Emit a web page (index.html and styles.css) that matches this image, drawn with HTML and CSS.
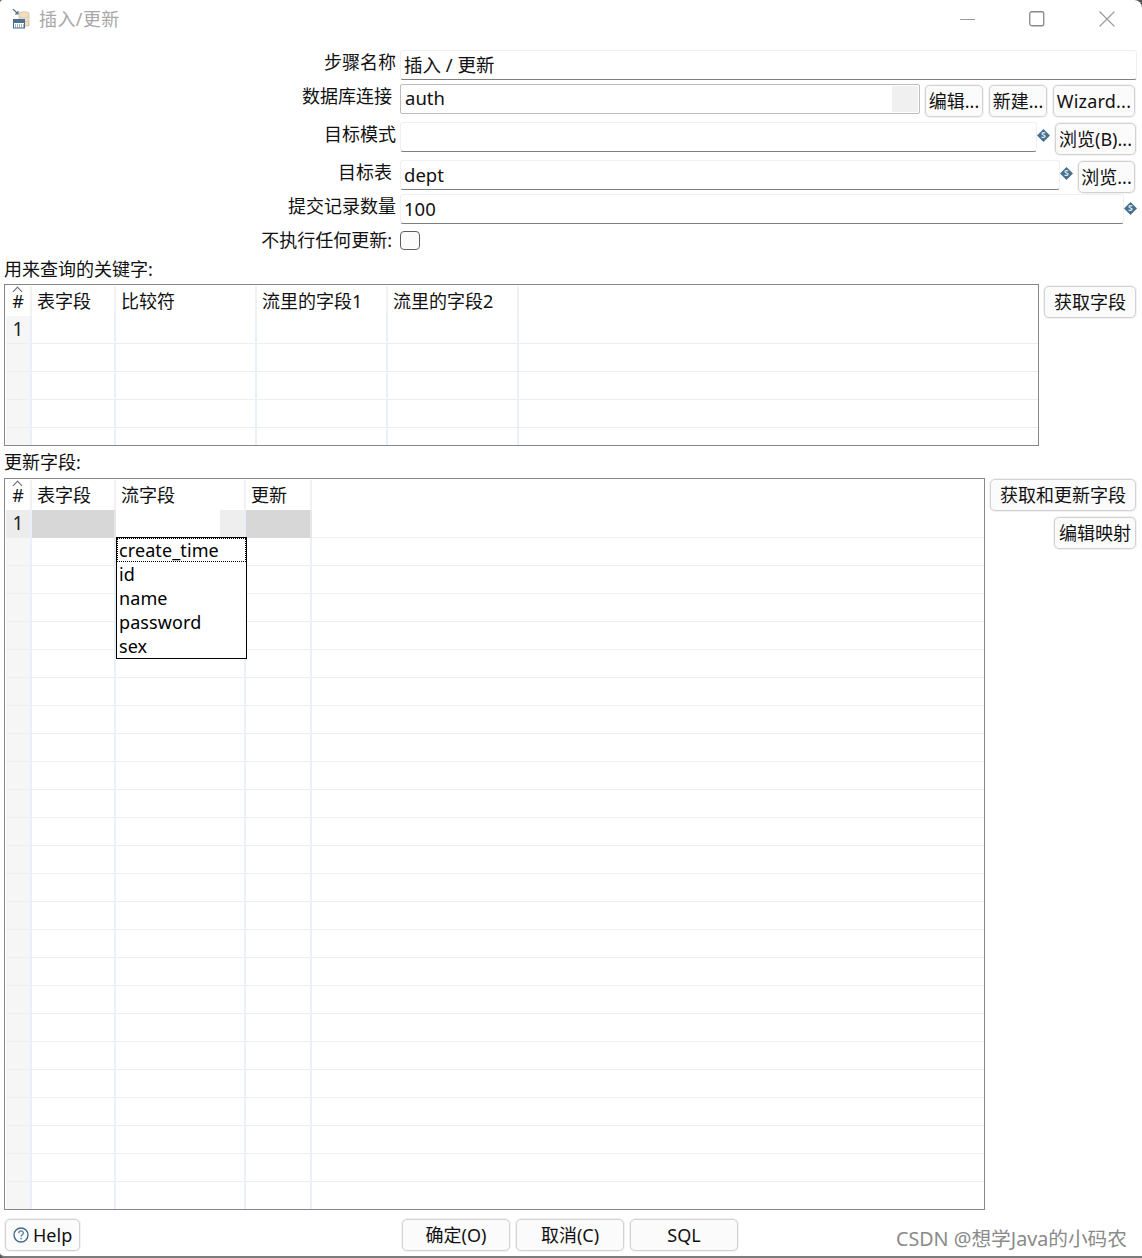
FILE: index.html
```html
<!DOCTYPE html>
<html lang="zh">
<head>
<meta charset="utf-8">
<title>插入/更新</title>
<link rel="stylesheet" href="styles.css">
</head>
<body>
<div class="window">
  <header class="titlebar">
    <svg class="app-icon" width="18" height="20" viewBox="0 0 18 20">
      <path d="M1 0l5 5M6 2v3H3" fill="none" stroke="#4a6f8c" stroke-width="1.2"/>
      <path d="M7 4c2-1.500 8-1.500 10 0v13H7z" fill="#f3dfc0" stroke="#cdbb9d" stroke-width=".8"/>
      <path d="M7 8c2 1 8 1 10 0M7 12c2 1 8 1 10 0" fill="none" stroke="#c3ccd2" stroke-width=".8"/>
      <rect x="1.500" y="10.500" width="11" height="8.500" fill="#fff" stroke="#4a6f8c"/>
      <path d="M2 11h10v3H2z" fill="#4a7290"/>
      <path d="M3 16h1M5 16h1M7 16h1M9 16h1M11 16h1M3 18h1M5 18h1M7 18h1M9 18h1M11 18h1" stroke="#4a6f8c"/>
    </svg>
    <span class="title">插入/更新</span>
    <div class="winctl">
      <svg width="16" height="16" viewBox="0 0 16 16"><path d="M0 8.500h15" stroke="#999"/></svg>
      <svg width="16" height="16" viewBox="0 0 16 16"><rect x=".75" y=".75" width="14" height="14" rx="2" fill="none" stroke="#888" stroke-width="1.300"/></svg>
      <svg width="16" height="16" viewBox="0 0 16 16"><path d="M.5.5l15 15M15.500.5l-15 15" stroke="#999" stroke-width="1.100"/></svg>
    </div>
  </header>

  <section class="form">
    <div class="row r-name">
      <label class="lbl lbl-wide">步骤名称</label>
      <div class="field f-name">插入 / 更新</div>
    </div>
    <div class="row r-conn">
      <label class="lbl">数据库连接</label>
      <div class="combo">auth<span class="combo-arrow"></span></div>
      <button class="btn b-edit">编辑...</button>
      <button class="btn b-new">新建...</button>
      <button class="btn b-wiz">Wizard...</button>
    </div>
    <div class="row r-schema">
      <label class="lbl lbl-wide">目标模式</label>
      <div class="field f-schema"></div>
      <svg class="var" viewBox="0 0 12 12"><path d="M6 0l6 6-6 6-6-6z" fill="#48708f"/><text x="6" y="8.600" text-anchor="middle" class="var-s">S</text></svg>
      <button class="btn b-browse-b">浏览(B)...</button>
    </div>
    <div class="row r-table">
      <label class="lbl">目标表</label>
      <div class="field f-table">dept</div>
      <svg class="var" viewBox="0 0 12 12"><path d="M6 0l6 6-6 6-6-6z" fill="#48708f"/><text x="6" y="8.600" text-anchor="middle" class="var-s">S</text></svg>
      <button class="btn b-browse">浏览...</button>
    </div>
    <div class="row r-commit">
      <label class="lbl lbl-wide">提交记录数量</label>
      <div class="field f-commit">100</div>
      <svg class="var" viewBox="0 0 12 12"><path d="M6 0l6 6-6 6-6-6z" fill="#48708f"/><text x="6" y="8.600" text-anchor="middle" class="var-s">S</text></svg>
    </div>
    <div class="row r-check">
      <label class="lbl">不执行任何更新:</label>
      <span class="checkbox"></span>
    </div>
  </section>

  <div class="section-label sl-key">用来查询的关键字:</div>
  <section class="table-row tr-key">
    <div class="grid grid-key">
      <table>
        <colgroup><col class="c-n"><col class="c-a"><col class="c-b"><col class="c-c"><col class="c-d"><col></colgroup>
        <thead><tr><th class="num"><span class="sort"></span>#</th><th>表字段</th><th>比较符</th><th>流里的字段1</th><th>流里的字段2</th><th class="fill"></th></tr></thead>
        <tbody>
          <tr><td class="num">1</td><td></td><td></td><td></td><td></td><td></td></tr>
          <tr><td class="num"></td><td></td><td></td><td></td><td></td><td></td></tr>
          <tr><td class="num"></td><td></td><td></td><td></td><td></td><td></td></tr>
          <tr><td class="num"></td><td></td><td></td><td></td><td></td><td></td></tr>
          <tr><td class="num"></td><td></td><td></td><td></td><td></td><td></td></tr>
        </tbody>
      </table>
    </div>
    <div class="side">
      <button class="btn b-get">获取字段</button>
    </div>
  </section>

  <div class="section-label sl-upd">更新字段:</div>
  <section class="table-row tr-upd">
    <div class="grid grid-upd">
      <table>
        <colgroup><col class="c-n"><col class="c-a"><col class="c-e"><col class="c-f"><col></colgroup>
        <thead><tr><th class="num"><span class="sort"></span>#</th><th>表字段</th><th>流字段</th><th>更新</th><th class="fill"></th></tr></thead>
        <tbody>
          <tr class="active"><td class="num">1</td><td class="sel"></td><td class="edit"><span class="edit-arrow"></span></td><td class="sel"></td><td></td></tr>
          <tr><td class="num"></td><td></td><td></td><td></td><td></td></tr>
          <tr><td class="num"></td><td></td><td></td><td></td><td></td></tr>
          <tr><td class="num"></td><td></td><td></td><td></td><td></td></tr>
          <tr><td class="num"></td><td></td><td></td><td></td><td></td></tr>
          <tr><td class="num"></td><td></td><td></td><td></td><td></td></tr>
          <tr><td class="num"></td><td></td><td></td><td></td><td></td></tr>
          <tr><td class="num"></td><td></td><td></td><td></td><td></td></tr>
          <tr><td class="num"></td><td></td><td></td><td></td><td></td></tr>
          <tr><td class="num"></td><td></td><td></td><td></td><td></td></tr>
          <tr><td class="num"></td><td></td><td></td><td></td><td></td></tr>
          <tr><td class="num"></td><td></td><td></td><td></td><td></td></tr>
          <tr><td class="num"></td><td></td><td></td><td></td><td></td></tr>
          <tr><td class="num"></td><td></td><td></td><td></td><td></td></tr>
          <tr><td class="num"></td><td></td><td></td><td></td><td></td></tr>
          <tr><td class="num"></td><td></td><td></td><td></td><td></td></tr>
          <tr><td class="num"></td><td></td><td></td><td></td><td></td></tr>
          <tr><td class="num"></td><td></td><td></td><td></td><td></td></tr>
          <tr><td class="num"></td><td></td><td></td><td></td><td></td></tr>
          <tr><td class="num"></td><td></td><td></td><td></td><td></td></tr>
          <tr><td class="num"></td><td></td><td></td><td></td><td></td></tr>
          <tr><td class="num"></td><td></td><td></td><td></td><td></td></tr>
          <tr><td class="num"></td><td></td><td></td><td></td><td></td></tr>
          <tr><td class="num"></td><td></td><td></td><td></td><td></td></tr>
          <tr><td class="num"></td><td></td><td></td><td></td><td></td></tr>
        </tbody>
      </table>
      <ul class="dropdown">
        <li class="focus">create_time</li>
        <li>id</li>
        <li>name</li>
        <li>password</li>
        <li>sex</li>
      </ul>
    </div>
    <div class="side side-upd">
      <button class="btn b-getupd">获取和更新字段</button>
      <button class="btn b-map">编辑映射</button>
    </div>
  </section>

  <footer class="footer">
    <button class="btn b-help">
      <svg width="16" height="16" viewBox="0 0 16 16"><circle cx="8" cy="8" r="7" fill="none" stroke="#3f6a8c" stroke-width="1.400"/><path d="M5.800 6.200c0-3 4.600-3 4.600-.2 0 1.700-2.300 1.700-2.300 3.500" fill="none" stroke="#5c7f99" stroke-width="1.300"/><circle cx="8.100" cy="11.600" r=".9" fill="#5c7f99"/></svg>
      Help
    </button>
    <div class="actions">
      <button class="btn b-act">确定(O)</button>
      <button class="btn b-act">取消(C)</button>
      <button class="btn b-act">SQL</button>
    </div>
    <span class="watermark">CSDN @想学Java的小码农</span>
  </footer>
</div>
</body>
</html>
```
FILE: styles.css
```css
* { box-sizing: border-box; }
html, body { margin: 0; padding: 0; }
body {
  width: 1142px;
  height: 1258px;
  overflow: hidden;
  background: #555;
  color: #111;
  font: 18px/24px "Noto Sans", "Noto Sans CJK SC", sans-serif;
}
.window {
  position: relative;
  width: 1142px;
  height: 1258px;
  background: #fff;
  border-bottom: 2px solid #7c7c7c;
  border-radius: 3px 8px 0 5px;
  overflow: hidden;
}
.titlebar {
  display: flex;
  align-items: center;
  height: 38px;
  padding-left: 12px;
}
.app-icon { flex: none; margin-right: 9px; }
.title { color: #a8a8a8; letter-spacing: .4px; }
.winctl {
  display: flex;
  gap: 53px;
  margin-left: auto;
  margin-right: 27px;
}
.winctl svg:last-child { margin-left: 1px; }
.form { padding-top: 12px; }
.row { display: flex; align-items: flex-start; }
.lbl { width: 392px; text-align: right; flex: none; margin-right: 8px; }
.lbl-wide { width: 396px; margin-right: 4px; }
.field {
  flex: none;
  height: 30px;
  padding: 1px 3px 0;
  font-size: 18.500px;
  line-height: 26px;
  background: #fff;
  border: 1px solid #f0f0f0;
  border-bottom: 1px solid #7f7f7f;
  border-radius: 3px;
}
.r-name { height: 34px; }
.f-name { width: 737px; }
.r-conn { height: 38px; }
.combo {
  position: relative;
  flex: none;
  width: 520px;
  height: 30px;
  padding-left: 4px;
  font-size: 18.500px;
  line-height: 26px;
  border: 1px solid #bcbcbc;
  border-radius: 2px;
  margin-right: 5px;
}
.combo-arrow {
  position: absolute;
  right: 1px;
  top: 1px;
  bottom: 1px;
  width: 26px;
  background: #f0f0f0;
}
.btn {
  flex: none;
  height: 32px;
  padding: 0;
  font: inherit;
  color: #111;
  background: #fbfbfb;
  border: 1px solid #d2d2d2;
  border-radius: 5px;
  box-shadow: 0 0 0 1px #f2f2f2;
  white-space: nowrap;
}
.b-edit { width: 58px; margin-top: 1px; margin-right: 6px; }
.b-new { width: 58px; margin-top: 1px; margin-right: 6px; }
.b-wiz { width: 82px; margin-top: 1px; letter-spacing: .2px; }
.r-schema { height: 38px; }
.f-schema { width: 637px; }
.r-table { height: 34px; }
.f-table { width: 660px; }
.r-commit { height: 37px; }
.f-commit { width: 724px; }
.var { flex: none; width: 13px; height: 13px; margin: 7px 0 0; }
.var-s { font: bold 8px "Noto Sans", sans-serif; fill: #dfe8ee; }
.b-browse-b { width: 81px; margin-top: 1px; margin-left: 5px; }
.b-browse { width: 57px; margin-top: 1px; margin-left: 5px; }
.r-commit .var { margin-top: 8px; }
.r-check { height: 26px; }
.r-check .lbl { margin-top: -3px; }
.checkbox {
  flex: none;
  width: 20px;
  height: 19px;
  border: 1px solid #5e5e5e;
  border-radius: 4px;
  background: #fbfbfb;
}
.section-label { padding-left: 4px; }
.sl-key { height: 27px; }
.sl-upd { height: 28px; margin-top: 4px; }
.table-row { display: flex; align-items: flex-start; }
.grid {
  position: relative;
  flex: none;
  margin-left: 4px;
  border: 1px solid #85878c;
  overflow: hidden;
}
.grid-key { width: 1035px; height: 162px; }
.grid-upd { width: 981px; height: 732px; }
table {
  width: 100%;
  table-layout: fixed;
  border-collapse: collapse;
  margin: 1px 0 0 1px;
}
.c-n { width: 25px; }
.c-a { width: 84px; }
.c-b { width: 141px; }
.c-c { width: 131px; }
.c-d { width: 131px; }
.c-e { width: 130px; }
.c-f { width: 66px; }
th {
  height: 30px;
  padding: 0 0 0 5px;
  text-align: left;
  font-weight: 400;
  border-right: 2px solid #f1f1f1;
}
th.num { position: relative; padding: 0; text-align: center; }
th.fill { border: 0; }
td {
  height: 28px;
  padding: 0;
  border-right: 2px solid #e9f0f9;
  border-bottom: 1px solid #eeeeee;
}
tbody tr:first-child td { height: 27px; }
td:last-child { border-right: 0; }
td.num {
  padding-top: 1px;
  line-height: 25px;
  text-align: center;
  background: #f6f6f6;
  color: #222;
  font-size: 19px;
}
.sel { background: #d7d7d7; border-bottom-color: #d7d7d7; border-right-color: #e6e6e6; }
.active td.num { background: #ececec; }
.edit { position: relative; }
.edit-arrow {
  position: absolute;
  top: 0;
  right: 0;
  bottom: 0;
  width: 24px;
  background: #eeeeee;
}
.sort {
  position: absolute;
  left: 8px;
  top: 2px;
  width: 7px;
  height: 7px;
  border-left: 1px solid #666;
  border-top: 1px solid #666;
  transform: rotate(45deg);
}
.dropdown {
  position: absolute;
  left: 111px;
  top: 58px;
  width: 131px;
  height: 122px;
  margin: 0;
  padding: 0;
  list-style: none;
  background: #fff;
  border: 1px solid #000;
  letter-spacing: .1px;
}
.dropdown li { height: 24px; padding-left: 2px; line-height: 24px; color: #000; }
.dropdown li.focus {
  border: 1px dotted #000;
  padding-left: 1px;
  line-height: 22px;
  overflow: hidden;
}
.side { flex: 1; display: flex; flex-direction: column; align-items: flex-end; padding-right: 6px; }
.b-get { width: 92px; height: 32px; margin-top: 2px; }
.side-upd { gap: 6px; padding-top: 1px; }
.b-getupd { width: 146px; }
.b-map { width: 82px; }
.footer {
  display: grid;
  grid-template-columns: 1fr auto 1fr;
  align-items: start;
  padding: 9px 7px 0 5px;
}
.b-help {
  justify-self: start;
  display: inline-flex;
  align-items: center;
  gap: 4px;
  width: 75px;
  padding-left: 7px;
}
.actions { display: flex; gap: 6px; }
.b-act { width: 108px; }
.watermark {
  position: absolute;
  right: 15px;
  bottom: 4px;
  color: #8a8a8a;
  font-size: 19.700px;
  line-height: 26px;
}
```
